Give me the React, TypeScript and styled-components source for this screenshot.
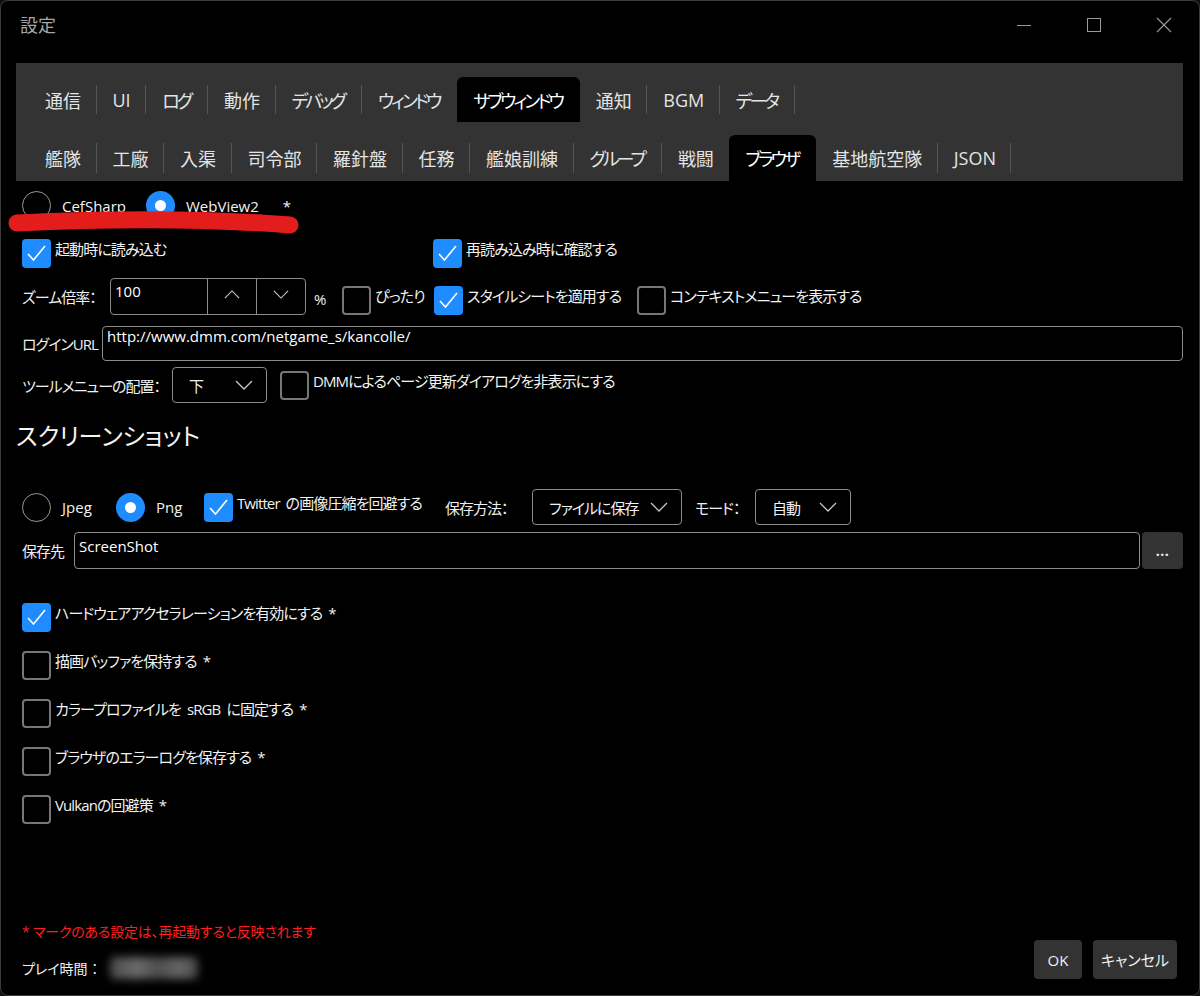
import styled, { createGlobalStyle } from 'styled-components';

const GlobalStyle = createGlobalStyle`
  html, body {
    margin: 0;
    background: #111;
  }
  body {
    font-family: "Open Sans", "Noto Sans CJK JP", sans-serif;
    font-feature-settings: "palt";
    color: #f0f0f0;
  }
`;

const BLUE = '#1e8cff';

// タブ定義
const mainTabs = ['通信', 'UI', 'ログ', '動作', 'デバッグ', 'ウィンドウ', 'サブウィンドウ', '通知', 'BGM', 'データ'];
const subTabs = ['艦隊', '工廠', '入渠', '司令部', '羅針盤', '任務', '艦娘訓練', 'グループ', '戦闘', 'ブラウザ', '基地航空隊', 'JSON'];

// カタカナのタブは字詰めする
const isKana = (s: string) => /[\u30A0-\u30FF]/.test(s);

const optionChecks = [
  { label: 'ハードウェアアクセラレーションを有効にする *', checked: true },
  { label: '描画バッファを保持する *', checked: false },
  { label: 'カラープロファイルを sRGB に固定する *', checked: false },
  { label: 'ブラウザのエラーログを保存する *', checked: false },
  { label: 'Vulkanの回避策 *', checked: false },
];

const Chevron = ({ up = false, w = 18 }: { up?: boolean; w?: number }) => (
  <svg width={w} height={w / 2 + 1} viewBox="0 0 18 10" fill="none">
    <polyline
      points={up ? '1,9 9,1 17,9' : '1,1 9,9 17,1'}
      stroke="#c8c8c8"
      strokeWidth="1.3"
    />
  </svg>
);

function Check({ label, checked }: { label: string; checked?: boolean }) {
  return (
    <CheckWrap>
      <CheckBox $checked={checked}>
        {checked && (
          <svg width="29" height="29" viewBox="0 0 29 29" fill="none">
            <polyline points="6,15 11.5,21 23,7" stroke="#fff" strokeWidth="1.6" />
          </svg>
        )}
      </CheckBox>
      <CheckText>{label}</CheckText>
    </CheckWrap>
  );
}

function Radio({ label, checked }: { label: string; checked?: boolean }) {
  return (
    <RadioWrap>
      <RadioCircle $checked={checked} />
      <RadioText>{label}</RadioText>
    </RadioWrap>
  );
}

function Select({ value, width }: { value: string; width: number }) {
  return (
    <SelectBox $w={width}>
      <span>{value}</span>
      <Chevron />
    </SelectBox>
  );
}

function TabStrip({ items, active, height }: { items: string[]; active: number; height: number }) {
  return (
    <TabRow $h={height}>
      {items.map((t, i) => (
        <Tab
          key={t}
          $active={i === active}
          $noSep={i === active || i === active - 1}
          $tight={isKana(t)}
        >
          {t}
        </Tab>
      ))}
    </TabRow>
  );
}

export default function App() {
  return (
    <>
      <GlobalStyle />
      <Window>
        <TitleBar>
          <Title>設定</Title>
          <Controls>
            <CtrlButton>
              <svg width="16" height="16" viewBox="0 0 16 16">
                <line x1="1" y1="8.5" x2="15" y2="8.5" stroke="#9a9a9a" strokeWidth="1" />
              </svg>
            </CtrlButton>
            <CtrlButton>
              <svg width="16" height="16" viewBox="0 0 16 16" fill="none">
                <rect x="1.5" y="1.5" width="13" height="13" stroke="#9a9a9a" strokeWidth="1" />
              </svg>
            </CtrlButton>
            <CtrlButton>
              <svg width="16" height="16" viewBox="0 0 16 16">
                <path d="M1 1 L15 15 M15 1 L1 15" stroke="#9a9a9a" strokeWidth="1.1" />
              </svg>
            </CtrlButton>
          </Controls>
        </TitleBar>

        <TabPanel>
          <TabStrip items={mainTabs} active={6} height={45} />
          <TabStrip items={subTabs} active={9} height={46} />
        </TabPanel>

        <Content>
          <Row $mt={0}>
            <Radio label="CefSharp" />
            <Gap $w={20} />
            <Radio label="WebView2" checked />
            <Star>*</Star>
          </Row>

          <Row $mt={19}>
            <Cell $w={411}>
              <Check label="起動時に読み込む" checked />
            </Cell>
            <Check label="再読み込み時に確認する" checked />
          </Row>

          <Row $mt={10} $align="flex-end">
            <Label $w={88}>ズーム倍率：</Label>
            <NumBox>
              <NumValue>100</NumValue>
              <Spin>
                <Chevron up w={16} />
              </Spin>
              <Spin>
                <Chevron w={16} />
              </Spin>
            </NumBox>
            <Unit>%</Unit>
            <Cell $w={92}>
              <Check label="ぴったり" />
            </Cell>
            <Cell $w={203}>
              <Check label="スタイルシートを適用する" checked />
            </Cell>
            <Check label="コンテキストメニューを表示する" />
          </Row>

          <Row $mt={11}>
            <Label $w={80}>ログインURL</Label>
            <TextBox $h={35} $pt={0}>http://www.dmm.com/netgame_s/kancolle/</TextBox>
          </Row>

          <Row $mt={6}>
            <Label $w={150}>ツールメニューの配置：</Label>
            <Select value="下" width={95} />
            <Gap $w={13} />
            <Check label="DMMによるページ更新ダイアログを非表示にする" />
          </Row>

          <Heading>スクリーンショット</Heading>

          <Row $mt={37}>
            <Cell $w={94}>
              <Radio label="Jpeg" />
            </Cell>
            <Cell $w={88}>
              <Radio label="Png" checked />
            </Cell>
            <Cell $w={241}>
              <Check label="Twitter の画像圧縮を回避する" checked />
            </Cell>
            <Label $w={87}>保存方法：</Label>
            <Select value="ファイルに保存" width={150} />
            <Gap $w={13} />
            <Label $w={60}>モード：</Label>
            <Select value="自動" width={96} />
          </Row>

          <Row $mt={7}>
            <Label $w={52}>保存先</Label>
            <TextBox $h={37} $pt={4}>ScreenShot</TextBox>
            <DotsButton>...</DotsButton>
          </Row>

          <CheckList>
            {optionChecks.map((c) => (
              <Check key={c.label} label={c.label} checked={c.checked} />
            ))}
          </CheckList>
        </Content>

        <Footer>
          <FooterInfo>
            <Note>* マークのある設定は、再起動すると反映されます</Note>
            <PlayRow>
              プレイ時間 ：<Blurred />
            </PlayRow>
          </FooterInfo>
          <Buttons>
            <DialogButton $w={48}>OK</DialogButton>
            <DialogButton $w={84}>キャンセル</DialogButton>
          </Buttons>
        </Footer>

        <Scribble width="310" height="45" viewBox="0 0 310 45" fill="none">
          <path d="M16 22 C 100 18, 200 17, 289 24" stroke="#e31c1c" strokeWidth="17" strokeLinecap="round" />
        </Scribble>
      </Window>
    </>
  );
}

const Window = styled.div`
  position: relative;
  box-sizing: border-box;
  width: 1200px;
  height: 996px;
  display: flex;
  flex-direction: column;
  background: #000;
  border: 1px solid #3b3b3b;
  border-radius: 8px;
  overflow: hidden;
`;

const TitleBar = styled.div`
  display: flex;
  align-items: flex-start;
  height: 62px;
  flex-shrink: 0;
`;

const Title = styled.div`
  padding: 12px 0 0 19px;
  font-size: 18px;
  line-height: 24px;
  color: #a6a6a6;
`;

const Controls = styled.div`
  display: flex;
  margin-left: auto;
`;

const CtrlButton = styled.div`
  width: 70px;
  height: 48px;
  display: flex;
  align-items: center;
  justify-content: center;
`;

const TabPanel = styled.div`
  display: flex;
  flex-direction: column;
  gap: 13px;
  margin: 0 16px 0 15px;
  padding: 14px 0 0 13px;
  background: #333;
  flex-shrink: 0;
`;

const TabRow = styled.div<{ $h: number }>`
  display: flex;
  height: ${(p) => p.$h}px;
`;

const Tab = styled.div<{ $active?: boolean; $noSep?: boolean; $tight?: boolean }>`
  position: relative;
  display: flex;
  align-items: center;
  padding: 0 ${(p) => (p.$tight ? 18 : 15.5)}px 0 16px;
  font-size: 18px;
  letter-spacing: ${(p) => (p.$tight ? -3 : 0)}px;
  white-space: nowrap;
  color: ${(p) => (p.$active ? '#fff' : '#e4e4e4')};
  background: ${(p) => (p.$active ? '#000' : 'transparent')};
  border-radius: 6px 6px 0 0;

  &::after {
    content: '';
    display: ${(p) => (p.$noSep ? 'none' : 'block')};
    position: absolute;
    right: 0;
    top: 8px;
    bottom: 8px;
    width: 1px;
    background: #555;
  }
`;

const Content = styled.div`
  flex: 1;
  display: flex;
  flex-direction: column;
  padding: 10px 16px 0 21px;
`;

const Row = styled.div<{ $mt: number; $align?: string }>`
  display: flex;
  align-items: ${(p) => p.$align || 'center'};
  margin-top: ${(p) => p.$mt}px;
`;

const Cell = styled.div<{ $w: number }>`
  display: flex;
  width: ${(p) => p.$w}px;
  flex-shrink: 0;
`;

const Gap = styled.div<{ $w: number }>`
  width: ${(p) => p.$w}px;
  flex-shrink: 0;
`;

const Label = styled.div<{ $w: number }>`
  align-self: center;
  width: ${(p) => p.$w}px;
  flex-shrink: 0;
  font-size: 15px;
  letter-spacing: -1px;
  white-space: nowrap;
  color: #efefef;
`;

const CheckWrap = styled.div`
  display: flex;
  align-items: flex-start;
`;

const CheckBox = styled.div<{ $checked?: boolean }>`
  box-sizing: border-box;
  width: 29px;
  height: 29px;
  flex-shrink: 0;
  border-radius: 4px;
  background: ${(p) => (p.$checked ? BLUE : 'transparent')};
  border: ${(p) => (p.$checked ? 'none' : '2px solid #777')};

  svg {
    display: block;
  }
`;

const CheckText = styled.span`
  margin-left: 4px;
  font-size: 15px;
  line-height: 20px;
  letter-spacing: -0.9px;
  word-spacing: 3px;
  white-space: nowrap;
  color: #f2f2f2;
`;

const RadioWrap = styled.div`
  display: flex;
  align-items: center;
`;

const RadioCircle = styled.div<{ $checked?: boolean }>`
  box-sizing: border-box;
  width: 29px;
  height: 29px;
  flex-shrink: 0;
  border-radius: 50%;
  display: flex;
  align-items: center;
  justify-content: center;
  background: ${(p) => (p.$checked ? BLUE : 'transparent')};
  border: ${(p) => (p.$checked ? 'none' : '1.5px solid #9a9a9a')};

  &::after {
    content: '';
    display: ${(p) => (p.$checked ? 'block' : 'none')};
    width: 11px;
    height: 11px;
    border-radius: 50%;
    background: #fff;
  }
`;

const RadioText = styled.span`
  margin-left: 11px;
  font-size: 15px;
  white-space: nowrap;
  color: #f2f2f2;
`;

const Star = styled.span`
  margin-left: 24px;
  font-size: 15px;
  color: #f2f2f2;
`;

const NumBox = styled.div`
  box-sizing: border-box;
  display: flex;
  width: 196px;
  height: 37px;
  flex-shrink: 0;
  border: 1px solid #8c8c8c;
  border-radius: 4px;
`;

const NumValue = styled.div`
  flex: 1;
  padding: 3px 4px;
  font-size: 15px;
  line-height: 18px;
  color: #fff;
`;

const Spin = styled.div`
  width: 49px;
  display: flex;
  align-items: center;
  justify-content: center;
  border-left: 1px solid #8c8c8c;
  padding-bottom: 4px;
  box-sizing: border-box;
`;

const Unit = styled.div`
  align-self: center;
  width: 36px;
  flex-shrink: 0;
  padding: 4px 0 0 8px;
  box-sizing: border-box;
  font-size: 15px;
`;

const SelectBox = styled.div<{ $w: number }>`
  box-sizing: border-box;
  display: flex;
  align-items: center;
  justify-content: space-between;
  width: ${(p) => p.$w}px;
  height: 36px;
  flex-shrink: 0;
  padding: 0 13px 0 16px;
  border: 1px solid #8c8c8c;
  border-radius: 4px;
  font-size: 15px;
  letter-spacing: -1px;
  white-space: nowrap;
  color: #f2f2f2;
`;

const TextBox = styled.div<{ $h: number; $pt: number }>`
  box-sizing: border-box;
  flex: 1;
  height: ${(p) => p.$h}px;
  padding: ${(p) => p.$pt}px 4px 0;
  border: 1px solid #8c8c8c;
  border-radius: 4px;
  font-size: 15px;
  line-height: 18px;
  color: #fff;
`;

const DotsButton = styled.div`
  width: 41px;
  height: 37px;
  margin-left: 2px;
  display: flex;
  align-items: center;
  justify-content: center;
  background: #333;
  border-radius: 4px;
  font-size: 14px;
  font-weight: 700;
  letter-spacing: 0.5px;
  color: #f0f0f0;
`;

const Heading = styled.h2`
  margin: 17px 0 0 -6px;
  font-size: 24px;
  font-weight: 400;
  line-height: 32px;
  color: #f4f4f4;
`;

const CheckList = styled.div`
  display: flex;
  flex-direction: column;
  gap: 19px;
  margin-top: 34px;
`;

const Footer = styled.div`
  display: flex;
  align-items: flex-end;
  padding: 0 22px 12px 21px;
`;

const FooterInfo = styled.div`
  display: flex;
  flex-direction: column;
`;

const Note = styled.div`
  font-size: 14px;
  line-height: 20px;
  letter-spacing: -0.2px;
  color: #ff1e1e;
`;

const PlayRow = styled.div`
  display: flex;
  align-items: center;
  height: 30px;
  margin-top: 11px;
  font-size: 14px;
  color: #f0f0f0;
`;

const Blurred = styled.div`
  width: 88px;
  height: 22px;
  margin-left: 12px;
  border-radius: 4px;
  background: linear-gradient(90deg, #4a4a4a, #6a6a6a 30%, #4e4e4e 55%, #666 80%, #444);
  filter: blur(4px);
`;

const Buttons = styled.div`
  display: flex;
  gap: 11px;
  margin-left: auto;
  margin-bottom: 4px;
`;

const DialogButton = styled.div<{ $w: number }>`
  width: ${(p) => p.$w}px;
  height: 39px;
  display: flex;
  align-items: center;
  justify-content: center;
  background: #333;
  border-radius: 4px;
  font-size: 15px;
  color: #f0f0f0;
`;

const Scribble = styled.svg`
  position: absolute;
  left: 0;
  top: 200px;
  pointer-events: none;
`;
